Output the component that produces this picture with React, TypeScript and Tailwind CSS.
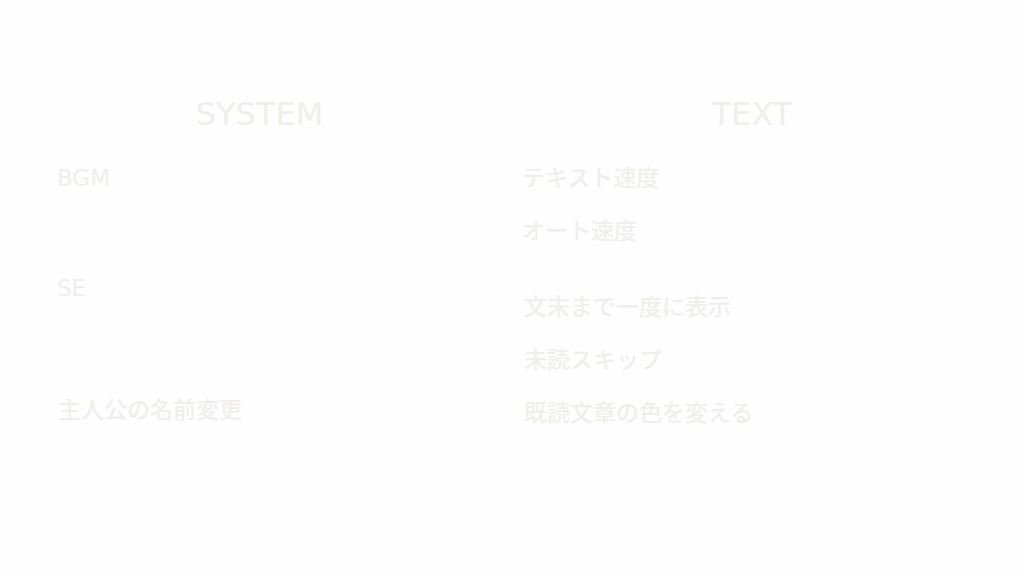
export default function App() {
  return (
    <main
      lang="ja"
      className="grid min-h-screen grid-cols-[405fr_460fr] content-start gap-x-[60px] bg-[#fefefe] pt-[94px] pr-[42px] pl-[57px] font-['DejaVu_Sans','Noto_Sans_CJK_JP',sans-serif] text-[#f0efeb]"
    >
      <section>
        <h1 className="text-center text-[32px] leading-10">SYSTEM</h1>
        <div className="mt-7 text-[23px] leading-8">
          <h2>BGM</h2>
          <h2 className="mt-[78px]">SE</h2>
          <h2 className="mt-[88px] pl-px font-['Noto_Sans_CJK_JP',sans-serif] font-medium">主人公の名前変更</h2>
        </div>
      </section>
      <section>
        <h1 className="text-center text-[32px] leading-10">TEXT</h1>
        <div className="mt-[26px] flex flex-col gap-11 font-['Noto_Sans_CJK_JP',sans-serif] text-[23px] leading-8 font-medium">
          <div className="flex flex-col gap-[21px]">
            <h2>テキスト速度</h2>
            <h2>オート速度</h2>
          </div>
          <div className="flex flex-col gap-[21px] pl-0.5">
            <h2>文末まで一度に表示</h2>
            <h2>未読スキップ</h2>
            <h2>既読文章の色を変える</h2>
          </div>
        </div>
      </section>
    </main>
  );
}
